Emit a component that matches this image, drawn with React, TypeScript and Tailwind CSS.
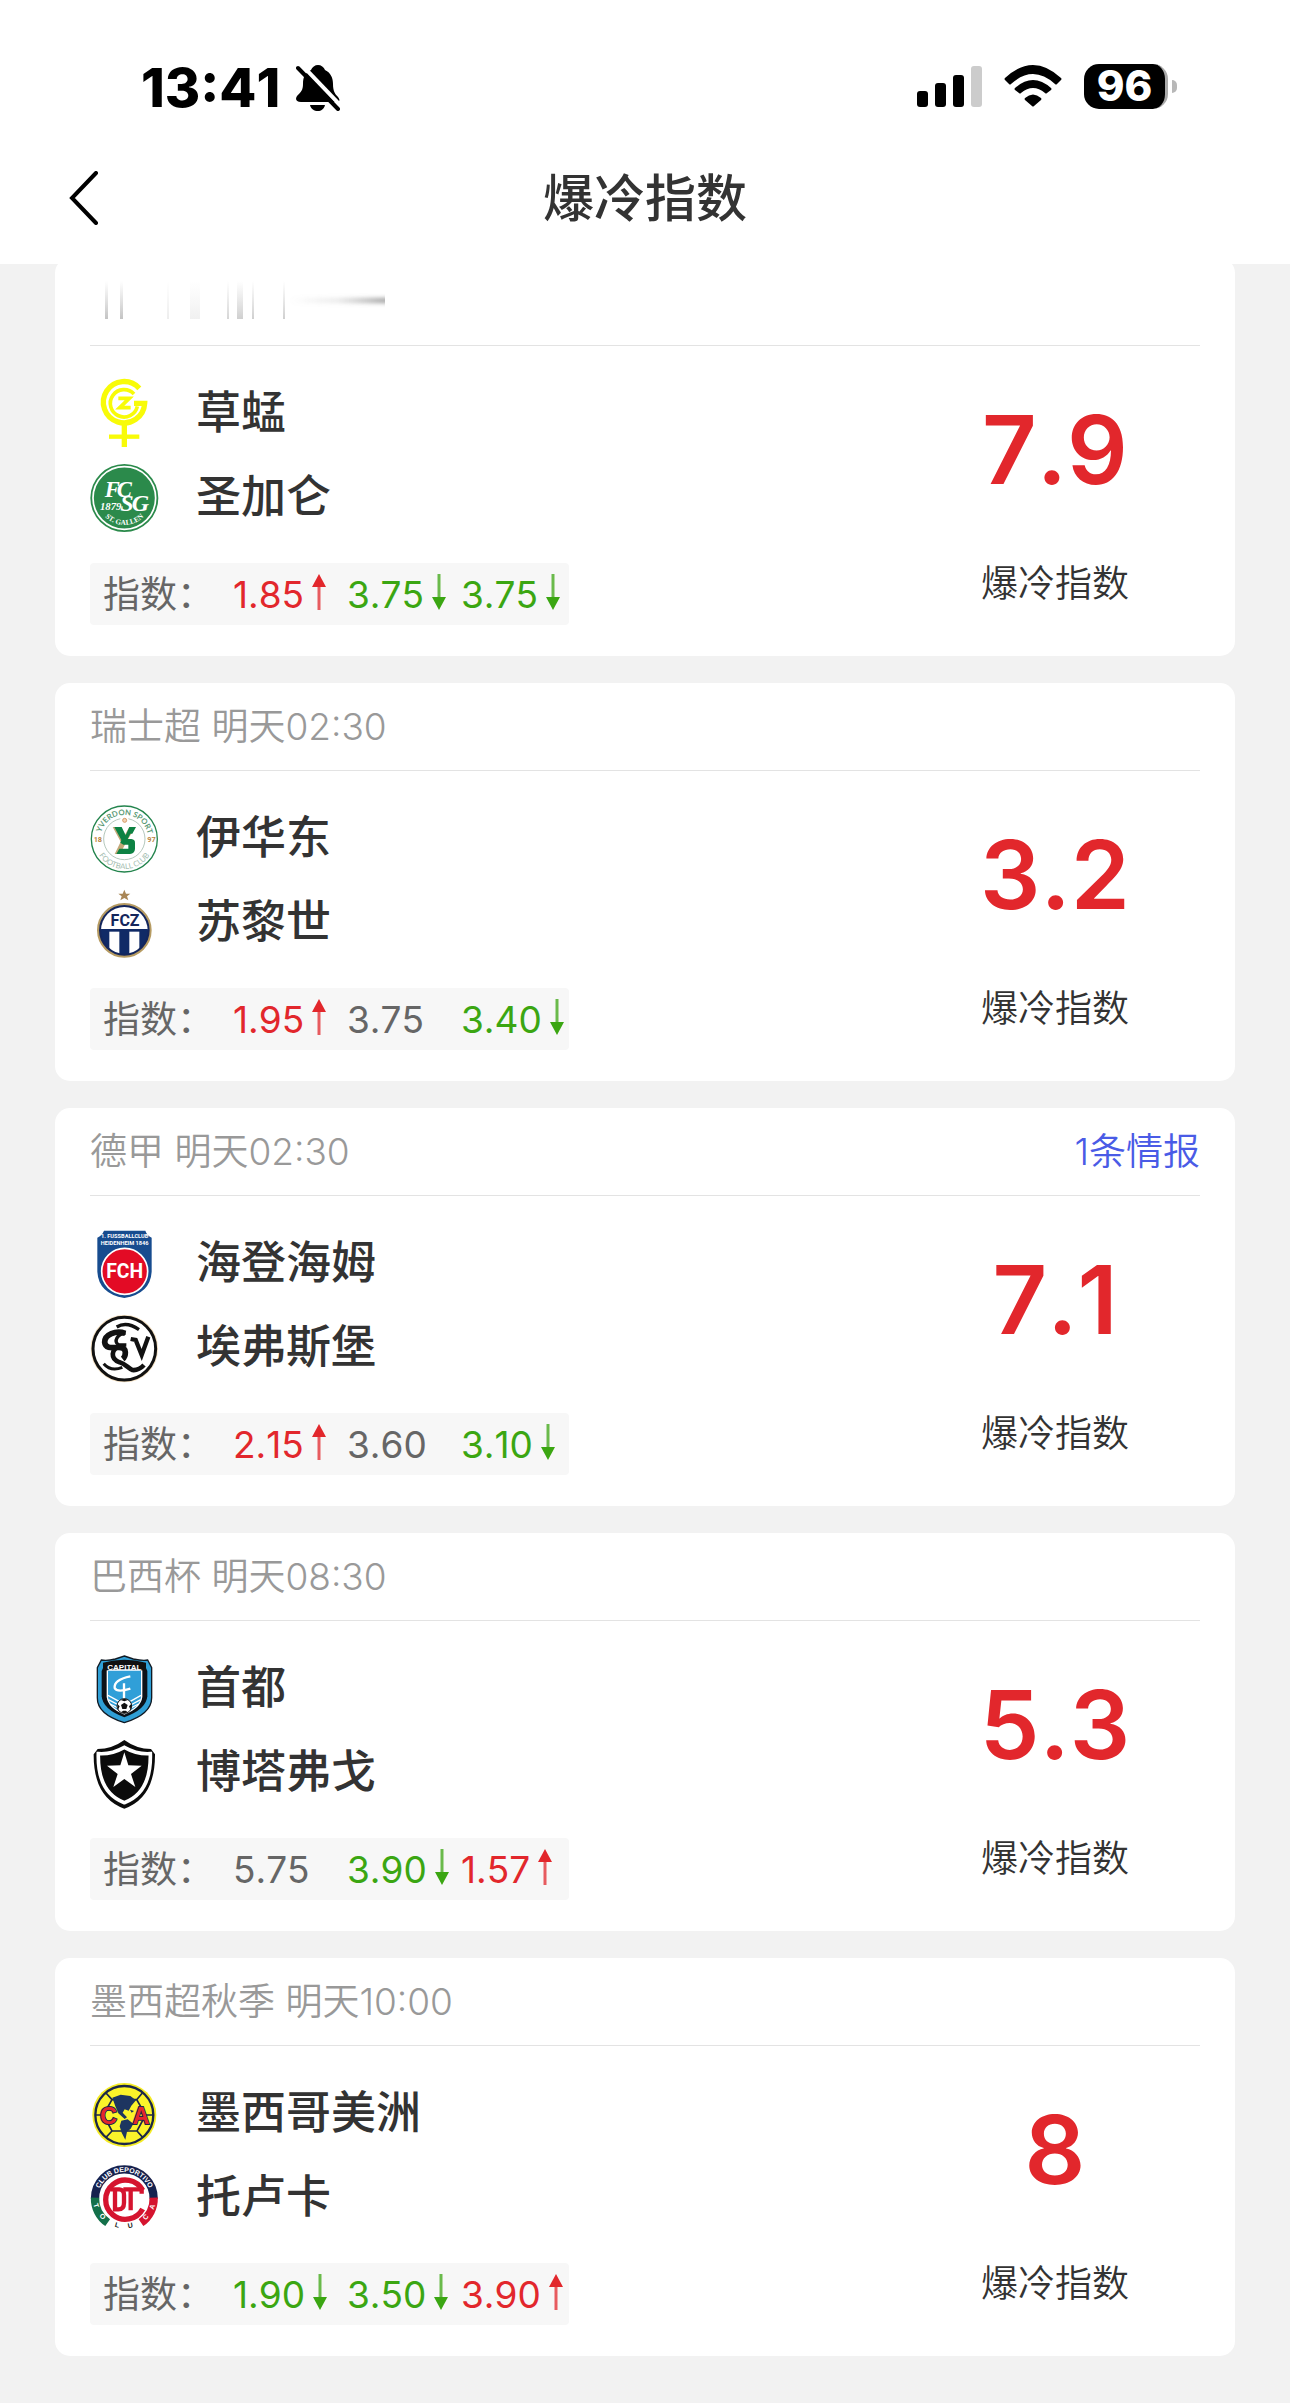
import React from 'react';

type Trend = 'up' | 'down' | 'flat';

interface Odd {
  value: string;
  trend: Trend;
}

interface Match {
  league?: string;
  time?: string;
  news?: string;
  home: { name: string; crest: React.ReactNode };
  away: { name: string; crest: React.ReactNode };
  odds: Odd[];
  score: string;
}

const TREND_COLOR: Record<Trend, string> = {
  up: 'text-[#e2272c]',
  down: 'text-[#3ba612]',
  flat: 'text-[#666666]',
};

const TREND_LABEL = { up: '上升', down: '下降' };

const Crest: React.FC<{ viewBox: string; children: React.ReactNode }> = ({ viewBox, children }) => (
  <svg viewBox={viewBox} className="size-[68px] shrink-0 overflow-visible" aria-hidden="true">
    {children}
  </svg>
);

const HOME_BOX = '30 27 204 204';
const AWAY_BOX = '30 279 204 204';

const Grasshopper = (
  <Crest viewBox={HOME_BOX}>
    <g fill="none" stroke="#f8fb08">
      <path d="M178 52A62 62 0 1 0 194 97H162" strokeWidth="16" />
      <path d="M162 69A41 41 0 1 0 172 106" strokeWidth="11" />
      <path d="M115 82H148L119 110H152" strokeWidth="11" />
      <path d="M133 160V228" strokeWidth="16" />
      <path d="M87 197H178" strokeWidth="13" />
    </g>
  </Crest>
);

const StGallen = (
  <Crest viewBox={AWAY_BOX}>
    <circle cx="133" cy="381" r="102" fill="#2b8a4b" />
    <circle cx="133" cy="381" r="94" fill="none" stroke="#ffffff" strokeWidth="5" />
    <text fill="#ffffff" fontFamily="Liberation Serif, serif" fontStyle="italic" fontWeight="700">
      <tspan x="74" y="378" fontSize="68">F</tspan>
      <tspan x="110" y="378" fontSize="68">C</tspan>
      <tspan x="121" y="420" fontSize="72">S</tspan>
      <tspan x="155" y="420" fontSize="72">G</tspan>
      <tspan x="60" y="417" fontSize="32">1879</tspan>
    </text>
    <path id="gallen" d="M58 413A82 82 0 0 0 208 413" fill="none" />
    <text fill="#ffffff" fontFamily="Liberation Serif, serif" fontSize="22" fontWeight="700">
      <textPath href="#gallen" startOffset="50%" textAnchor="middle">ST. GALLEN</textPath>
    </text>
  </Crest>
);

const Yverdon = (
  <Crest viewBox={HOME_BOX}>
    <circle cx="133" cy="129" r="99" fill="#ffffff" stroke="#23844d" strokeWidth="4" />
    <circle cx="133" cy="129" r="62" fill="none" stroke="#b5c8bd" strokeWidth="3" />
    <circle cx="133" cy="72" r="13" fill="#ffffff" />
    <circle cx="134" cy="73" r="6" fill="#f3d3b5" stroke="#d69a66" strokeWidth="3" />
    <path d="M98 93H121L134 118 148 93H166L142 133 120 174H104L122 137Z" fill="#c3a878" />
    <path
      d="M103 93H125L137 118 148 93H168L157 113H151L143 129H154Q166 130 165 142V159Q164 173 150 174H109L118 158H145V146H130L121 140 124 132Z"
      fill="#0d8243"
    />
    <path id="yv-top" d="M61 129A72 72 0 0 1 205 129" fill="none" />
    <path id="yv-bottom" d="M43 129A90 90 0 0 0 223 129" fill="none" />
    <g fontFamily="Lato, sans-serif" fontSize="23">
      <text fill="#5b9a76" fontWeight="700">
        <textPath href="#yv-top" startOffset="51%" textAnchor="middle">YVERDON SPORT</textPath>
      </text>
      <text fill="#a4bdb0">
        <textPath href="#yv-bottom" startOffset="50%" textAnchor="middle">FOOTBALL CLUB</textPath>
      </text>
    </g>
    <g fill="#b8823c" fontFamily="Roboto, sans-serif" fontSize="22" fontWeight="700">
      <text x="41" y="137">18</text>
      <text x="202" y="137">97</text>
    </g>
  </Crest>
);

const Zurich = (
  <Crest viewBox={AWAY_BOX}>
    <path d="M133 281L138 293 151 293 141 301 145 313 133 306 121 313 125 301 115 293 128 293Z" fill="#a98656" />
    <clipPath id="fcz">
      <circle cx="133" cy="403" r="70" />
    </clipPath>
    <circle cx="133" cy="403" r="79" fill="#14265c" stroke="#b69b62" strokeWidth="6" />
    <g clipPath="url(#fcz)">
      <rect x="60" y="330" width="150" height="70" fill="#ffffff" />
      <rect x="60" y="399" width="150" height="85" fill="#102a66" />
      <rect x="88" y="407" width="30" height="76" fill="#ffffff" />
      <rect x="148" y="407" width="30" height="76" fill="#ffffff" />
    </g>
    <g fill="#14265c" fontFamily="Roboto, sans-serif" fontSize="48" fontWeight="700" textAnchor="middle">
      <text x="105" y="391">F</text>
      <text x="134" y="391">C</text>
      <text x="164" y="391">Z</text>
    </g>
  </Crest>
);

const Heidenheim = (
  <Crest viewBox={HOME_BOX}>
    <path d="M72 29H196Q201 44 215 50V152Q211 218 133 231Q56 218 52 152V50Q66 44 72 29Z" fill="#174c8f" />
    <g fill="#ffffff" fontFamily="Roboto, sans-serif" fontSize="17" fontWeight="700" textAnchor="middle">
      <text x="134" y="51">1. FUSSBALLCLUB</text>
      <text x="134" y="72">HEIDENHEIM 1846</text>
    </g>
    <circle cx="134" cy="151" r="69" fill="#e30b25" stroke="#ffffff" strokeWidth="5" />
    <text x="134" y="172" fill="#ffffff" fontFamily="Roboto, sans-serif" fontSize="58" fontWeight="700" textAnchor="middle">
      FCH
    </text>
  </Crest>
);

const Elversberg = (
  <Crest viewBox={AWAY_BOX}>
    <circle cx="133" cy="383" r="97" fill="#ffffff" stroke="#f3dfc0" strokeWidth="8" />
    <circle cx="133" cy="383" r="94" fill="none" stroke="#111111" strokeWidth="9" />
    <g fill="none" stroke="#111111">
      <path d="M110 318Q140 300 177 326" strokeWidth="10" />
      <path d="M136 337C107 327 74 341 74 364C76 386 102 379 117 379C145 379 136 408 128 414" strokeWidth="17" />
      <path d="M137 336C111 338 101 361 115 371L139 372" strokeWidth="10" />
      <path d="M122 375C92 383 90 414 119 424C135 428 143 440 157 447Q176 449 192 432" strokeWidth="14" />
      <path d="M71 428Q93 453 127 439" strokeWidth="9" />
      <path d="M152 354L167 357L185 402L205 347" strokeWidth="13" />
    </g>
  </Crest>
);

const Capital = (
  <Crest viewBox={HOME_BOX}>
    <path
      d="M133 30L160 39Q189 45 203 42L215 65V155Q215 204 133 230Q51 204 52 155V65L64 42Q82 45 106 39Z"
      fill="#2f9fd6"
      stroke="#101a24"
      strokeWidth="4"
    />
    <path d="M74 55H193L202 75V151Q199 190 133 214Q68 190 65 151V75Z" fill="#0c1218" />
    <path d="M82 72H185V153Q181 185 133 204Q86 185 82 153Z" fill="#309fd8" stroke="#ffffff" strokeWidth="4" />
    <path d="M69 50Q133 33 198 50V75Q133 60 69 75Z" fill="#111111" />
    <text x="133" y="71" fill="#ffffff" fontFamily="Liberation Sans, sans-serif" fontSize="24" fontWeight="700" textAnchor="middle">
      CAPITAL
    </text>
    <g fill="none" stroke="#ffffff">
      <path d="M151 91Q101 101 104 126Q111 141 151 128M132 112V160" strokeWidth="7" />
      <path d="M84 148L117 166M85 161L116 177M90 174L119 188M183 148L151 166M182 161L152 177M176 174L148 188" strokeWidth="4" />
    </g>
    <circle cx="133" cy="180" r="22" fill="#ffffff" stroke="#111111" strokeWidth="3" />
    <path d="M133 170L143 177 139 189H127L123 177ZM122 162L133 166 144 162 133 158ZM112 174L119 181 114 192ZM154 174L147 181 152 192ZM122 199L130 194H137L144 199 133 202Z" fill="#111111" />
  </Crest>
);

const Botafogo = (
  <Crest viewBox={AWAY_BOX}>
    <path d="M133 282Q170 309 213 309L225 325Q226 455 133 488Q40 455 41 325L53 309Q96 309 133 282Z" fill="#0b0b0b" />
    <path d="M133 304Q172 326 211 323Q214 440 133 470Q52 440 55 323Q94 326 133 304Z" fill="#0b0b0b" stroke="#ffffff" strokeWidth="11" />
    <path d="M133 319L145 358 185 359 153 384 166 423 133 399 100 423 113 384 81 359 121 358Z" fill="#ffffff" />
  </Crest>
);

const America = (
  <Crest viewBox={HOME_BOX}>
    <circle cx="133" cy="132" r="96" fill="#f5ec24" />
    <circle cx="133" cy="132" r="87" fill="#fbf32a" stroke="#1c2748" strokeWidth="7" />
    <g fill="none" stroke="#1c2748" strokeWidth="5">
      <path d="M46 132H70L96 86H170L197 132L171 180H96L70 132M96 86L78 66M170 86L187 66M96 180L78 199M171 180L188 199M197 132H220" />
    </g>
    <path
      d="M97 80L122 71 151 75 168 88 154 104 146 119 134 115 128 125 141 139 134 144 115 127 106 106ZM124 149L143 145 160 158 152 173 141 182 136 206 125 185 119 166ZM150 116L162 120 155 125Z"
      fill="#1d3560"
    />
    <g
      fill="#e5262b"
      stroke="#1c2748"
      strokeWidth="6"
      paintOrder="stroke"
      fontFamily="Liberation Sans, sans-serif"
      fontSize="70"
      fontWeight="700"
      textAnchor="middle"
    >
      <text x="85" y="160">C</text>
      <text x="183" y="159">A</text>
    </g>
  </Crest>
);

const Toluca = (
  <Crest viewBox={AWAY_BOX}>
    <g fill="none" strokeWidth="25">
      <path d="M45 383A88 88 0 0 1 221 383" stroke="#16224f" />
      <path d="M45 380A88 88 0 0 0 83 455" stroke="#14704a" />
      <path d="M221 380A88 88 0 0 1 183 455" stroke="#d5142f" />
    </g>
    <path d="M188 358A59 59 0 1 0 188 414" fill="none" stroke="#d5142f" strokeWidth="16" />
    <path d="M92 355H118Q132 356 132 372V395Q132 415 115 415H105V357M130 355H185V368M152 357V418" fill="none" stroke="#d5142f" strokeWidth="13" />
    <path id="tol-top" d="M53 383A80 80 0 0 1 213 383" fill="none" />
    <path id="tol-bottom" d="M37 376A96 96 0 0 0 229 376" fill="none" />
    <g fontFamily="Liberation Sans, sans-serif" fontSize="21" fontWeight="700" fill="#ffffff">
      <text>
        <textPath href="#tol-top" startOffset="50%" textAnchor="middle">CLUB DEPORTIVO</textPath>
      </text>
      <text>
        <textPath href="#tol-bottom" startOffset="8%">T</textPath>
      </text>
      <text>
        <textPath href="#tol-bottom" startOffset="21%">O</textPath>
      </text>
      <text fill="#222222">
        <textPath href="#tol-bottom" startOffset="40%">L</textPath>
      </text>
      <text fill="#222222">
        <textPath href="#tol-bottom" startOffset="54%">U</textPath>
      </text>
      <text>
        <textPath href="#tol-bottom" startOffset="73%">C</textPath>
      </text>
      <text>
        <textPath href="#tol-bottom" startOffset="86%">A</textPath>
      </text>
    </g>
  </Crest>
);

const MATCHES: Match[] = [
  {
    home: { name: '草蜢', crest: Grasshopper },
    away: { name: '圣加仑', crest: StGallen },
    odds: [
      { value: '1.85', trend: 'up' },
      { value: '3.75', trend: 'down' },
      { value: '3.75', trend: 'down' },
    ],
    score: '7.9',
  },
  {
    league: '瑞士超',
    time: '明天02:30',
    home: { name: '伊华东', crest: Yverdon },
    away: { name: '苏黎世', crest: Zurich },
    odds: [
      { value: '1.95', trend: 'up' },
      { value: '3.75', trend: 'flat' },
      { value: '3.40', trend: 'down' },
    ],
    score: '3.2',
  },
  {
    league: '德甲',
    time: '明天02:30',
    news: '1条情报',
    home: { name: '海登海姆', crest: Heidenheim },
    away: { name: '埃弗斯堡', crest: Elversberg },
    odds: [
      { value: '2.15', trend: 'up' },
      { value: '3.60', trend: 'flat' },
      { value: '3.10', trend: 'down' },
    ],
    score: '7.1',
  },
  {
    league: '巴西杯',
    time: '明天08:30',
    home: { name: '首都', crest: Capital },
    away: { name: '博塔弗戈', crest: Botafogo },
    odds: [
      { value: '5.75', trend: 'flat' },
      { value: '3.90', trend: 'down' },
      { value: '1.57', trend: 'up' },
    ],
    score: '5.3',
  },
  {
    league: '墨西超秋季',
    time: '明天10:00',
    home: { name: '墨西哥美洲', crest: America },
    away: { name: '托卢卡', crest: Toluca },
    odds: [
      { value: '1.90', trend: 'down' },
      { value: '3.50', trend: 'down' },
      { value: '3.90', trend: 'up' },
    ],
    score: '8',
  },
];

const StatusBar: React.FC = () => (
  <div className="flex h-[132px] items-center justify-between pt-11 pr-[113px] pl-[141px] text-black">
    <div className="flex items-center gap-4">
      <span className="text-[54px] leading-none font-extrabold [font-kerning:none]">13:41</span>
      <svg viewBox="0 0 44 46" className="h-[46px] w-[44px]" role="img" aria-label="静音">
        <path
          d="M22 0C25 0 28 2 29 5C35 8 37 13 37 19C37 26 39 29 42 32C45 36 43 37 39 37H5C0 37-1 34 1 31C5 27 7 25 7 19C7 12 9 8 15 5C16 2 19 0 22 0Z"
        />
        <path d="M14 40H29C28 44 25 46 22 46C18 46 15 44 14 40Z" />
        <path d="M2 -4L46 42" stroke="#ffffff" strokeWidth="4" />
        <path d="M2 3L42 44" stroke="#000000" strokeWidth="4" strokeLinecap="round" />
      </svg>
    </div>
    <div className="flex items-center pb-1">
      <svg viewBox="0 0 65 42" className="h-[42px] w-[65px]" role="img" aria-label="信号">
        <rect x="0" y="26" width="11" height="16" rx="3" />
        <rect x="18" y="18" width="11" height="24" rx="3" />
        <rect x="36" y="10" width="11" height="32" rx="3" />
        <rect x="54" y="1" width="11" height="41" rx="3" fill="#cccccc" />
      </svg>
      <svg viewBox="0 0 58 42" className="ml-[22px] h-[42px] w-[58px]" role="img" aria-label="无线网络">
        <path d="M1 13Q29-13 57 13Q58 14 57 15L53 19Q52 20 51 19Q29-1 7 19Q6 20 5 19L1 15Q0 14 1 13Z" />
        <path d="M11 23Q29 7 47 23Q48 24 47 25L43 28Q42 29 41 28Q29 18 17 28Q16 29 15 28L11 25Q10 24 11 23Z" />
        <path d="M21 33Q29 26 37 33Q38 34 37 35L30 41Q29 42 28 41L21 35Q20 34 21 33Z" />
      </svg>
      <div className="ml-[22px] flex items-center gap-1">
        <span className="flex h-[45px] w-[84px] items-center justify-center rounded-[15px] border-r-3 border-[#aaaaaa] bg-black text-[42px] leading-none font-extrabold text-white">
          96
        </span>
        <span className="h-[13px] w-[5px] rounded-r-full bg-[#b8b8b8]" />
      </div>
    </div>
  </div>
);

const TitleBar: React.FC = () => (
  <div className="grid h-[132px] grid-cols-[1fr_auto_1fr] items-center px-[68px]">
    <button type="button" aria-label="返回" className="justify-self-start">
      <svg viewBox="0 0 31 54" className="h-[54px] w-[31px]" fill="none" stroke="#000000" strokeWidth="4">
        <path d="M28 2L4 27L28 52" strokeLinecap="round" />
      </svg>
    </button>
    <h1 className="text-[51px] leading-none font-medium text-[#333333]">爆冷指数</h1>
  </div>
);

// league line that is still being wiped in behind the title bar
const SmearedLine: React.FC = () => (
  <svg viewBox="0 0 296 38" className="mb-1 h-[38px] w-[296px]" aria-hidden="true">
    <defs>
      <linearGradient id="fade-y" x1="0" y1="0" x2="0" y2="1">
        <stop offset="0" stopColor="#999999" stopOpacity="0" />
        <stop offset="1" stopColor="#888888" stopOpacity="0.5" />
      </linearGradient>
      <linearGradient id="fade-x">
        <stop offset="0" stopColor="#999999" stopOpacity="0" />
        <stop offset="0.5" stopColor="#999999" stopOpacity="0.2" />
        <stop offset="1" stopColor="#888888" stopOpacity="0.8" />
      </linearGradient>
      <filter id="soft" x="-5%" y="-100%" width="105%" height="300%">
        <feGaussianBlur stdDeviation="0 2" />
      </filter>
    </defs>
    <g fill="url(#fade-y)">
      <rect x="15" width="3" height="38" />
      <rect x="30" width="3" height="38" />
      <rect x="77" width="2" height="38" opacity="0.3" />
      <rect x="100" width="10" height="38" opacity="0.25" />
      <rect x="137" width="2" height="38" opacity="0.7" />
      <rect x="147" width="6" height="38" opacity="0.8" />
      <rect x="162" width="2" height="38" opacity="0.8" />
      <rect x="193" width="2" height="38" opacity="0.8" />
    </g>
    <rect x="200" y="17" width="95" height="5" fill="url(#fade-x)" filter="url(#soft)" />
  </svg>
);

const TrendArrow: React.FC<{ trend: 'up' | 'down' }> = ({ trend }) => (
  <svg viewBox="0 0 14 36" className="mb-1 h-[36px] w-[14px]" fill="currentColor" role="img" aria-label={TREND_LABEL[trend]}>
    {trend === 'up' ? (
      <>
        <path d="M7 0L14 13H0Z" />
        <path d="M5.5 13H8.5V36H5.5Z" opacity="0.75" />
      </>
    ) : (
      <>
        <path d="M7 36L0 23H14Z" />
        <path d="M5.5 0H8.5V23H5.5Z" opacity="0.75" />
      </>
    )}
  </svg>
);

const MatchCard: React.FC<{ match: Match }> = ({ match }) => (
  <article className="rounded-[15px] bg-white px-[35px] pb-[31px]">
    <header className="flex h-[88px] items-center justify-between border-b border-[#e3e3e3] text-[37px] leading-none font-[350] text-[#999999]">
      {match.league ? (
        <span>
          {match.league} {match.time}
        </span>
      ) : (
        <SmearedLine />
      )}
      {match.news && (
        <a href="#news" className="text-[#4a5be6] [font-kerning:none]">
          {match.news}
        </a>
      )}
    </header>
    <div className="flex justify-between pt-[34px]">
      <div>
        <div className="flex flex-col gap-4">
          {[match.home, match.away].map((team) => (
            <div key={team.name} className="flex h-[68px] items-center gap-[38px]">
              {team.crest}
              <span className="pb-[3px] text-[45px] leading-none font-medium text-[#333333]">{team.name}</span>
            </div>
          ))}
        </div>
        <div className="mt-[31px] grid h-[62px] grid-cols-[130px_114px_114px_108px] items-center rounded bg-[#f7f7f7] pl-[13px] text-[37px] leading-none font-[380] [font-kerning:none]">
          <span className="text-[#666666]">指数：</span>
          {match.odds.map((odd, i) => (
            <span key={i} className={`flex items-center gap-2 ${TREND_COLOR[odd.trend]}`}>
              {odd.value}
              {odd.trend !== 'flat' && <TrendArrow trend={odd.trend} />}
            </span>
          ))}
        </div>
      </div>
      <div className="flex w-[290px] flex-col items-center pt-[22px]">
        <strong className="text-[95px] leading-none font-[560] text-[#e2272c] [font-kerning:none]">{match.score}</strong>
        <span className="mt-[68px] text-[37px] leading-none font-[350] text-[#333333]">爆冷指数</span>
      </div>
    </div>
  </article>
);

export default function App() {
  return (
    <div className="min-h-screen bg-[#f2f2f2] font-['Inter','Noto_Sans_CJK_SC',sans-serif]">
      <div className="sticky top-0 z-10 bg-white">
        <StatusBar />
        <TitleBar />
      </div>
      <main className="-mt-[6px] flex flex-col gap-[27px] px-[55px] pb-[45px]">
        {MATCHES.map((match) => (
          <MatchCard key={match.home.name} match={match} />
        ))}
      </main>
    </div>
  );
}
